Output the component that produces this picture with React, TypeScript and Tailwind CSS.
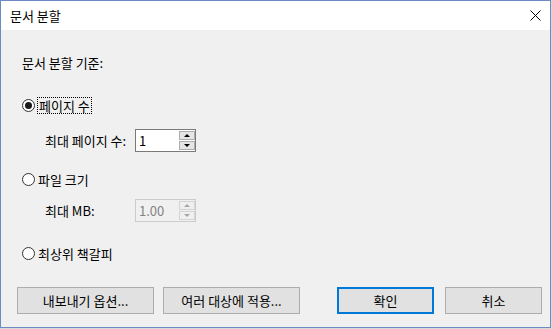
const FONT = { fontFamily: '"Noto Sans CJK KR", "Liberation Sans", sans-serif' };

function Radio({ checked, label, focused }: { checked?: boolean; label: string; focused?: boolean }) {
  return (
    <div className="flex items-center h-[18px]">
      <span className="w-[13px] h-[13px] rounded-full border border-[#333333] bg-white grid place-items-center shrink-0">
        {checked && <span className="w-[7px] h-[7px] rounded-full bg-[#1a1a1a]" />}
      </span>
      <span
        className={`ml-[2px] h-[17px] flex items-center leading-none border ${
          focused ? 'border-dotted border-black px-[1px]' : 'border-transparent pl-0 pr-[1px]'
        }`}
      >
        {label}
      </span>
    </div>
  );
}

function Spin({ value, disabled }: { value: string; disabled?: boolean }) {
  const box = disabled ? 'border-[#d4d4d4] bg-[#f0f0f0]' : 'border-[#adadad] bg-[#e5e5e5]';
  return (
    <div
      className={`w-[61px] h-[23px] flex border ${
        disabled ? 'border-[#cccccc] bg-[#f0f0f0] text-[#838383]' : 'border-[#7a7a7a] bg-white text-black'
      }`}
    >
      <div className="flex-1 flex items-center pl-[3px] text-[13px]">{value}</div>
      <div className="w-[16px] flex flex-col gap-[1px] py-[1px]">
        <div className={`flex-1 grid place-items-center border ${box}`}>
          <span
            className={`w-0 h-0 border-x-[3px] border-x-transparent border-b-[3px] ${
              disabled ? 'border-b-[#a6a6a6]' : 'border-b-black'
            }`}
          />
        </div>
        <div className={`flex-1 grid place-items-center border ${box}`}>
          <span
            className={`w-0 h-0 border-x-[3px] border-x-transparent border-t-[3px] ${
              disabled ? 'border-t-[#a6a6a6]' : 'border-t-black'
            }`}
          />
        </div>
      </div>
    </div>
  );
}

function Btn({ label, width, primary }: { label: string; width: string; primary?: boolean }) {
  return (
    <button
      className={`${width} h-[27px] bg-[#e1e1e1] text-[13px] text-black flex items-center justify-center ${
        primary ? 'border-2 border-[#0078d7]' : 'border border-[#adadad]'
      }`}
    >
      {label}
    </button>
  );
}

export default function App() {
  return (
    <div className="w-[552px] h-[329px] bg-[#d8d8d8] text-[13px] text-black" style={FONT}>
      <div className="w-[551px] h-[328px] border border-[#6b8cc0] bg-[#f0f0f0] flex flex-col">
        <header className="h-[29px] shrink-0 bg-white flex items-center justify-between pl-[9px] pr-[9px]">
          <span className="leading-none">문서 분할</span>
          <svg width="11" height="11" viewBox="0 0 11 11" aria-hidden="true">
            <path d="M0.5 0.5 L10.5 10.5 M10.5 0.5 L0.5 10.5" stroke="#000" strokeWidth="1" fill="none" />
          </svg>
        </header>

        <div className="flex-1 flex flex-col pl-[21px] pt-[24px]">
          <div className="h-[16px] flex items-center leading-none">문서 분할 기준:</div>

          <div className="mt-[26px]">
            <Radio checked focused label="페이지 수" />
          </div>
          <div className="mt-[15px] pl-[23px] flex items-center">
            <span className="w-[90px] leading-none">최대 페이지 수:</span>
            <Spin value="1" />
          </div>

          <div className="mt-[18px]">
            <Radio label="파일 크기" />
          </div>
          <div className="mt-[11px] pl-[23px] flex items-center">
            <span className="w-[90px] leading-none">최대 MB:</span>
            <Spin value="1.00" disabled />
          </div>

          <div className="mt-[22px]">
            <Radio label="최상위 책갈피" />
          </div>

          <div className="mt-[25px] -ml-[5px] flex items-center">
            <Btn label="내보내기 옵션..." width="w-[137px]" />
            <div className="ml-[9px]">
              <Btn label="여러 대상에 적용..." width="w-[137px]" />
            </div>
            <div className="ml-[37px]">
              <Btn label="확인" width="w-[97px]" primary />
            </div>
            <div className="ml-[11px]">
              <Btn label="취소" width="w-[97px]" />
            </div>
          </div>
        </div>
      </div>
    </div>
  );
}
